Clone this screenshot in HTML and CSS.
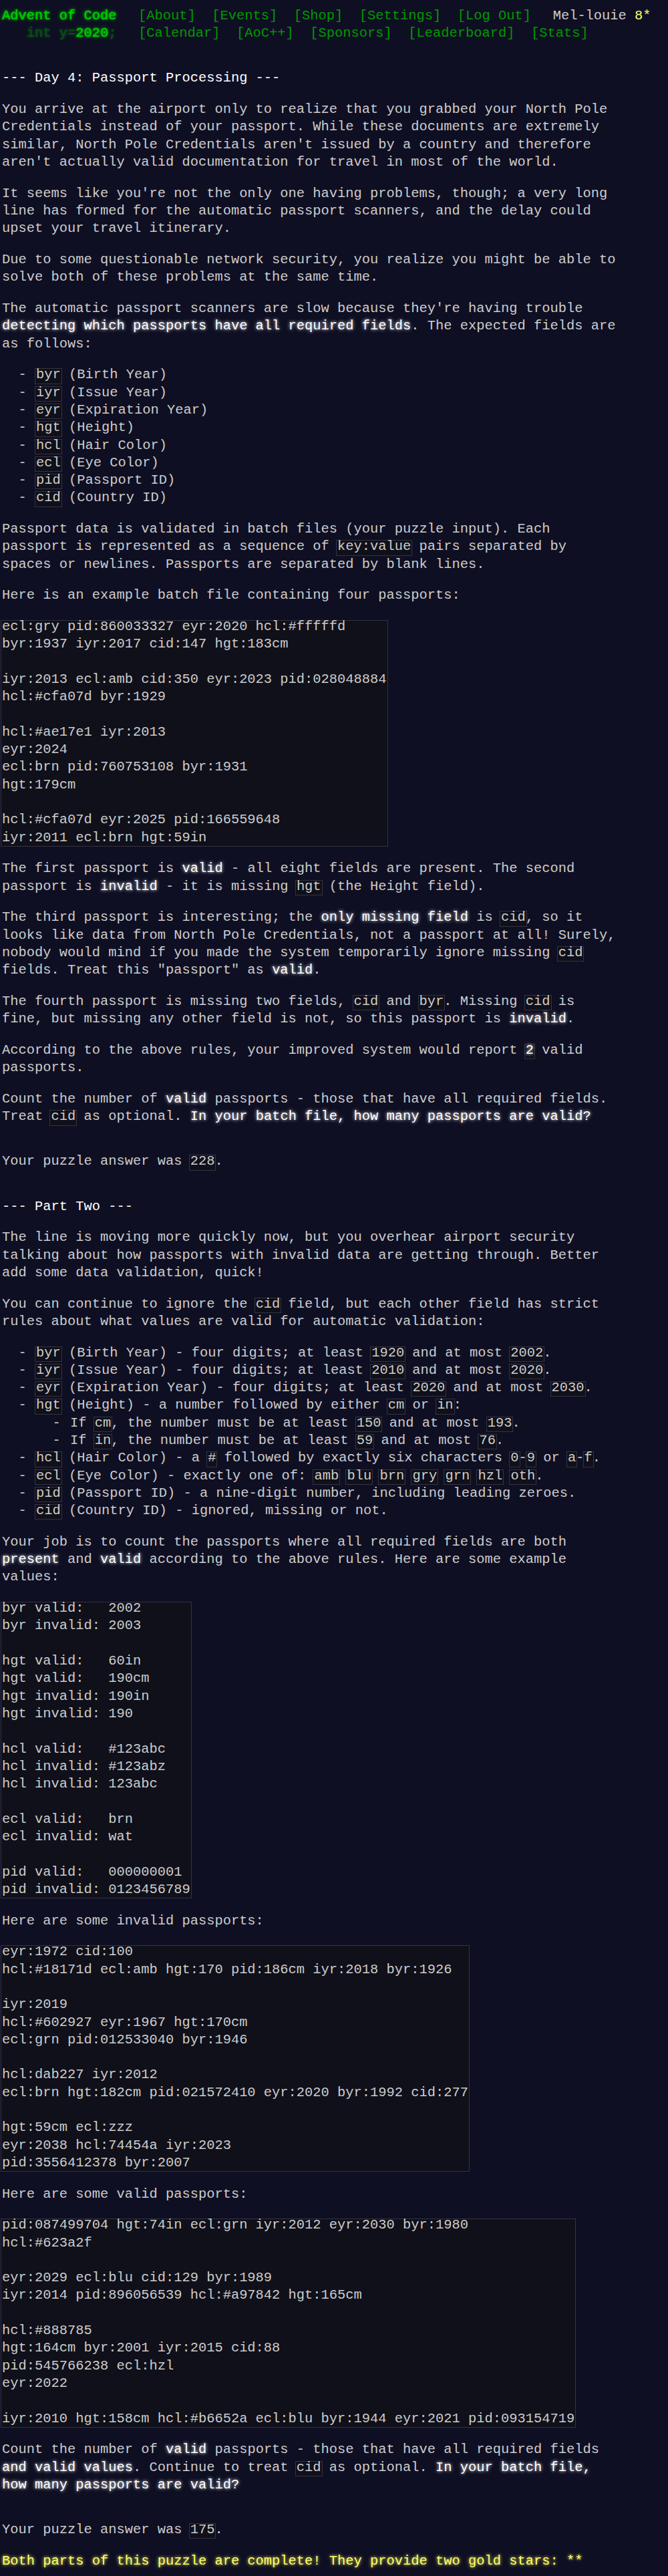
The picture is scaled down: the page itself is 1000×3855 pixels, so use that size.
FILE: index.html
```
<!DOCTYPE html>
<html lang="en">
<head>
<meta charset="utf-8">
<title>Day 4 - Advent of Code 2020</title>
<link rel="stylesheet" href="styles.css">
</head>
<body>
<header><div class="hrow"><h1 class="title-global"><a href="#">Advent of Code</a></h1><nav><ul><li><a href="#">[About]</a></li><li><a href="#">[Events]</a></li><li><a href="#">[Shop]</a></li><li><a href="#">[Settings]</a></li><li><a href="#">[Log Out]</a></li></ul></nav><div class="user">Mel-louie <span class="star-count">8*</span></div></div><div class="hrow"><h1 class="title-event">&nbsp;&nbsp;&nbsp;<span class="title-event-wrap">int y=</span><a href="#">2020</a><span class="title-event-wrap">;</span></h1><nav><ul><li><a href="#">[Calendar]</a></li><li><a href="#">[AoC++]</a></li><li><a href="#">[Sponsors]</a></li><li><a href="#">[Leaderboard]</a></li><li><a href="#">[Stats]</a></li></ul></nav></div></header>
<main>
<article class="day-desc"><h2>--- Day 4: Passport Processing ---</h2>
<p>You arrive at the airport only to realize that you grabbed your North Pole Credentials instead of your passport. While these documents are extremely similar, North Pole Credentials aren't issued by a country and therefore aren't actually valid documentation for travel in most of the world.</p>
<p>It seems like you're not the only one having problems, though; a very long line has formed for the automatic passport scanners, and the delay could upset your travel itinerary.</p>
<p>Due to some questionable network security, you realize you might be able to solve both of these problems at the same time.</p>
<p>The automatic passport scanners are slow because they're having trouble <em>detecting which passports have all required fields</em>. The expected fields are as follows:</p>
<ul class="list">
<li><code>byr</code> (Birth Year)</li>
<li><code>iyr</code> (Issue Year)</li>
<li><code>eyr</code> (Expiration Year)</li>
<li><code>hgt</code> (Height)</li>
<li><code>hcl</code> (Hair Color)</li>
<li><code>ecl</code> (Eye Color)</li>
<li><code>pid</code> (Passport ID)</li>
<li><code>cid</code> (Country ID)</li>
</ul>
<p>Passport data is validated in batch files (your puzzle input). Each passport is represented as a sequence of <code>key:value</code> pairs separated by spaces or newlines. Passports are separated by blank lines.</p>
<p>Here is an example batch file containing four passports:</p>
<pre><code>ecl:gry pid:860033327 eyr:2020 hcl:#fffffd
byr:1937 iyr:2017 cid:147 hgt:183cm

iyr:2013 ecl:amb cid:350 eyr:2023 pid:028048884
hcl:#cfa07d byr:1929

hcl:#ae17e1 iyr:2013
eyr:2024
ecl:brn pid:760753108 byr:1931
hgt:179cm

hcl:#cfa07d eyr:2025 pid:166559648
iyr:2011 ecl:brn hgt:59in
</code></pre>
<p>The first passport is <em>valid</em> - all eight fields are present. The second passport is <em>invalid</em> - it is missing <code>hgt</code> (the Height field).</p>
<p>The third passport is interesting; the <em>only missing field</em> is <code>cid</code>, so it looks like data from North Pole Credentials, not a passport at all! Surely, nobody would mind if you made the system temporarily ignore missing <code>cid</code> fields. Treat this "passport" as <em>valid</em>.</p>
<p>The fourth passport is missing two fields, <code>cid</code> and <code>byr</code>. Missing <code>cid</code> is fine, but missing any other field is not, so this passport is <em>invalid</em>.</p>
<p>According to the above rules, your improved system would report <code><em>2</em></code> valid passports.</p>
<p>Count the number of <em>valid</em> passports - those that have all required fields. Treat <code>cid</code> as optional. <em>In your batch file, how many passports are valid?</em></p>
</article>
<p>Your puzzle answer was <code>228</code>.</p>
<article class="day-desc"><h2>--- Part Two ---</h2>
<p>The line is moving more quickly now, but you overhear airport security talking about how passports with invalid data are getting through. Better add some data validation, quick!</p>
<p>You can continue to ignore the <code>cid</code> field, but each other field has strict rules about what values are valid for automatic validation:</p>
<ul class="list">
<li><code>byr</code> (Birth Year) - four digits; at least <code>1920</code> and at most <code>2002</code>.</li>
<li><code>iyr</code> (Issue Year) - four digits; at least <code>2010</code> and at most <code>2020</code>.</li>
<li><code>eyr</code> (Expiration Year) - four digits; at least <code>2020</code> and at most <code>2030</code>.</li>
<li><code>hgt</code> (Height) - a number followed by either <code>cm</code> or <code>in</code>:
<ul class="list">
<li>If <code>cm</code>, the number must be at least <code>150</code> and at most <code>193</code>.</li>
<li>If <code>in</code>, the number must be at least <code>59</code> and at most <code>76</code>.</li>
</ul>
</li>
<li><code>hcl</code> (Hair Color) - a <code>#</code> followed by exactly six characters <code>0</code>-<code>9</code> or <code>a</code>-<code>f</code>.</li>
<li><code>ecl</code> (Eye Color) - exactly one of: <code>amb</code> <code>blu</code> <code>brn</code> <code>gry</code> <code>grn</code> <code>hzl</code> <code>oth</code>.</li>
<li><code>pid</code> (Passport ID) - a nine-digit number, including leading zeroes.</li>
<li><code>cid</code> (Country ID) - ignored, missing or not.</li>
</ul>
<p>Your job is to count the passports where all required fields are both <em>present</em> and <em>valid</em> according to the above rules. Here are some example values:</p>
<pre><code>byr valid:   2002
byr invalid: 2003

hgt valid:   60in
hgt valid:   190cm
hgt invalid: 190in
hgt invalid: 190

hcl valid:   #123abc
hcl invalid: #123abz
hcl invalid: 123abc

ecl valid:   brn
ecl invalid: wat

pid valid:   000000001
pid invalid: 0123456789
</code></pre>
<p>Here are some invalid passports:</p>
<pre><code>eyr:1972 cid:100
hcl:#18171d ecl:amb hgt:170 pid:186cm iyr:2018 byr:1926

iyr:2019
hcl:#602927 eyr:1967 hgt:170cm
ecl:grn pid:012533040 byr:1946

hcl:dab227 iyr:2012
ecl:brn hgt:182cm pid:021572410 eyr:2020 byr:1992 cid:277

hgt:59cm ecl:zzz
eyr:2038 hcl:74454a iyr:2023
pid:3556412378 byr:2007
</code></pre>
<p>Here are some valid passports:</p>
<pre><code>pid:087499704 hgt:74in ecl:grn iyr:2012 eyr:2030 byr:1980
hcl:#623a2f

eyr:2029 ecl:blu cid:129 byr:1989
iyr:2014 pid:896056539 hcl:#a97842 hgt:165cm

hcl:#888785
hgt:164cm byr:2001 iyr:2015 cid:88
pid:545766238 ecl:hzl
eyr:2022

iyr:2010 hgt:158cm hcl:#b6652a ecl:blu byr:1944 eyr:2021 pid:093154719
</code></pre>
<p>Count the number of <em>valid</em> passports - those that have all required fields <em>and valid values</em>. Continue to treat <code>cid</code> as optional. <em>In your batch file, how many passports are valid?</em></p>
</article>
<p>Your puzzle answer was <code>175</code>.</p>
<p class="day-success">Both parts of this puzzle are complete! They provide two gold stars: **</p>
</main>
</body>
</html>
```
FILE: styles.css
```
html {
  background: #0f0f23;
}

body {
  margin: 0;
  padding: 11px 0 0 3px;
  color: #cccccc;
  font-family: "Liberation Mono", "DejaVu Sans Mono", monospace;
  font-size: 20.42px;
  line-height: 26.3px;
}

a {
  color: #009900;
  text-decoration: none;
}

header {
  white-space: nowrap;
  margin-bottom: 2em;
}

header h1 {
  display: inline-block;
  margin: 0;
  padding-right: 1em;
  font-size: 1em;
  font-weight: normal;
}

header h1 a,
header h1 span {
  display: inline-block;
  color: #00cc00;
  text-shadow: 0 0 2px #00cc00, 0 0 5px #00cc00;
}

header .title-event-wrap {
  opacity: 0.33;
  white-space: pre;
}

header nav {
  display: inline-block;
}

header nav ul {
  list-style: none;
  padding: 0;
  margin: 0;
  display: inline-block;
}

header nav li {
  display: inline-block;
  padding: 0 0.6em;
}

header .user {
  display: inline-block;
  padding-left: 1em;
}

.star-count {
  color: #ffff66;
}

.day-desc {
  width: 45.1em;
  margin: 2em 0;
}

.day-desc h2 {
  color: #ffffff;
  margin: 1em 0;
  font-size: 1em;
  font-weight: normal;
  white-space: nowrap;
}

p {
  margin: 1em 0;
}

ul.list {
  list-style: none;
  padding: 0;
  margin: 1em 0;
}

ul.list ul.list {
  margin: 0;
}

ul.list li {
  position: relative;
  padding-left: 2.5em;
}

ul.list li::before {
  content: "\00a0\00a0-\00a0";
  position: absolute;
  left: 0;
}

em {
  color: #ffffff;
  font-style: normal;
  text-shadow: 0 0 5px #ffffff;
}

pre {
  margin: 1em 0;
  font-family: "Liberation Mono", "DejaVu Sans Mono", monospace;
  font-size: 1em;
}

code {
  position: relative;
  display: inline-block;
  margin: 0;
  padding: 0;
  font-family: "Liberation Mono", "DejaVu Sans Mono", monospace;
  font-size: 1em;
}

code::before {
  z-index: -1;
  content: "";
  position: absolute;
  display: block;
  left: -2px;
  right: -2px;
  top: 3px;
  bottom: 0;
  border: 1px solid #333340;
  background: #10101a;
}

.day-success {
  color: #ffff66;
  text-shadow: 0 0 5px #ffff66;
}
```
